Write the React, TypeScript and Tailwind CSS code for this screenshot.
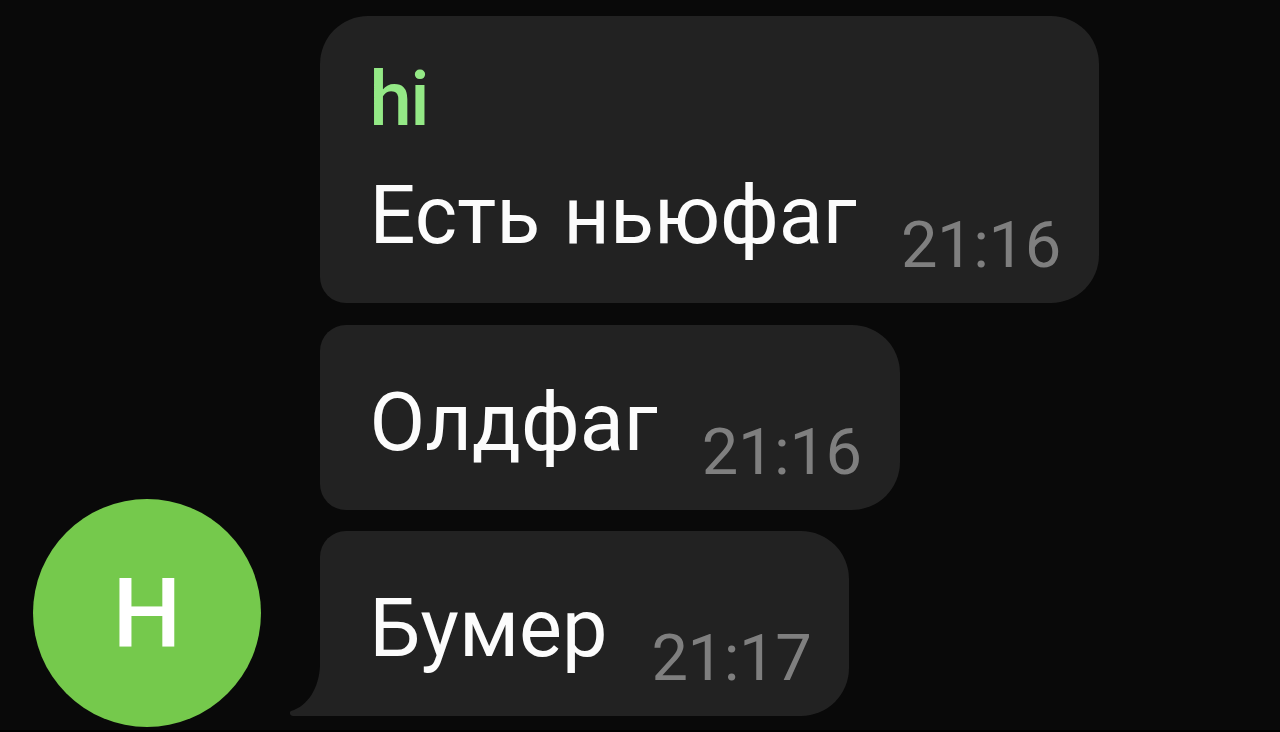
import clsx from 'clsx';

interface Message {
  id: number;
  author?: string;
  text: string;
  time: string;
}

const messages: Message[] = [
  { id: 1, author: 'hi', text: 'Есть ньюфаг', time: '21:16' },
  { id: 2, text: 'Олдфаг', time: '21:16' },
  { id: 3, text: 'Бумер', time: '21:17' },
];

export default function App() {
  return (
    <div className="flex h-[732px] w-[1280px] items-end overflow-hidden border-b-2 border-black bg-[#090909] pl-[33px] font-['Roboto',sans-serif]">
      <Avatar letter="H" />
      <div className="mb-3.5 ml-[59px] flex flex-col items-start gap-[21.5px]">
        {messages.map((message, index) => (
          <Bubble key={message.id} message={message} last={index === messages.length - 1} />
        ))}
      </div>
    </div>
  );
}

function Avatar({ letter }: { letter: string }) {
  return (
    <div className="mb-[3px] flex size-[228px] shrink-0 items-center justify-center rounded-full bg-[#75c94c] pt-0.5">
      <span className="text-[97px] font-medium leading-none text-white">{letter}</span>
    </div>
  );
}

function Bubble({ message, last }: { message: Message; last: boolean }) {
  return (
    <div
      className={clsx(
        'relative rounded-r-[48px] bg-[#222222] pl-[49.5px] pr-[38px]',
        message.author ? 'h-[287px] rounded-tl-[48px] rounded-bl-[26px] pt-[36px]' : 'h-[185px] rounded-tl-[26px] pt-[51px]',
        !message.author && !last && 'rounded-bl-[26px]'
      )}
    >
      {message.author && (
        <div className="mb-[37px] h-[80px] text-[76px] font-medium leading-[94px] tracking-[-1.5px] text-[#94e986]">
          {message.author}
        </div>
      )}
      <div className="flex items-start gap-[44px] whitespace-nowrap">
        <span className="text-[81px] leading-[93px] text-[#fcfcfc] [word-spacing:3px]">{message.text}</span>
        <span className="pt-[38px] text-[65px] leading-[76px] tracking-[-0.4px] text-[#7f7f7f]">{message.time}</span>
      </div>
      {last && (
        <svg className="absolute bottom-0 left-[-31px]" width="32" height="64" viewBox="0 0 32 64" fill="#222222">
          <path d="M32 0H31V14C30 36 19 54 2 59C0 60 1 64 4 64H32Z" />
        </svg>
      )}
    </div>
  );
}
